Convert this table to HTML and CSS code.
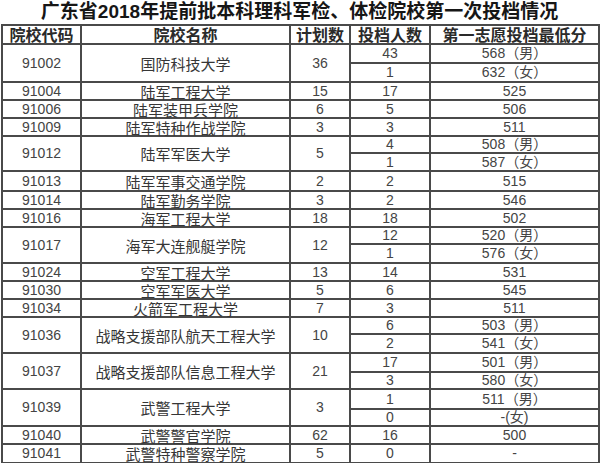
FILE: index.html
```html
<!DOCTYPE html>
<html lang="zh-CN">
<head>
<meta charset="utf-8">
<title>广东省2018年提前批本科理科军检、体检院校第一次投档情况</title>
<link rel="stylesheet" href="styles.css">
</head>
<body>
<div class="sheet">
  <div class="title">广东省2018年提前批本科理科军检、体检院校第一次投档情况</div>
  <table class="grid">
    <colgroup>
      <col class="c-code"><col class="c-name"><col class="c-plan"><col class="c-count"><col class="c-score">
    </colgroup>
    <thead>
      <tr class="h19"><th>院校代码</th><th>院校名称</th><th>计划数</th><th>投档人数</th><th>第一志愿投档最低分</th></tr>
    </thead>
    <tbody>
      <tr class="h19"><td rowspan="2" class="num">91002</td><td rowspan="2" class="name">国防科技大学</td><td rowspan="2" class="num">36</td><td class="num">43</td><td class="num">568（男）</td></tr>
      <tr class="h19"><td class="num">1</td><td class="num">632（女）</td></tr>
      <tr class="h18"><td class="num">91004</td><td class="name">陆军工程大学</td><td class="num">15</td><td class="num">17</td><td class="num">525</td></tr>
      <tr class="h18"><td class="num">91006</td><td class="name">陆军装甲兵学院</td><td class="num">6</td><td class="num">5</td><td class="num">506</td></tr>
      <tr class="h18"><td class="num">91009</td><td class="name">陆军特种作战学院</td><td class="num">3</td><td class="num">3</td><td class="num">511</td></tr>
      <tr class="h17"><td rowspan="2" class="num">91012</td><td rowspan="2" class="name">陆军军医大学</td><td rowspan="2" class="num">5</td><td class="num">4</td><td class="num">508（男）</td></tr>
      <tr class="h18"><td class="num">1</td><td class="num">587（女）</td></tr>
      <tr class="h20"><td class="num">91013</td><td class="name">陆军军事交通学院</td><td class="num">2</td><td class="num">2</td><td class="num">515</td></tr>
      <tr class="h18"><td class="num">91014</td><td class="name">陆军勤务学院</td><td class="num">3</td><td class="num">2</td><td class="num">546</td></tr>
      <tr class="h18"><td class="num">91016</td><td class="name">海军工程大学</td><td class="num">18</td><td class="num">18</td><td class="num">502</td></tr>
      <tr class="h17"><td rowspan="2" class="num">91017</td><td rowspan="2" class="name">海军大连舰艇学院</td><td rowspan="2" class="num">12</td><td class="num">12</td><td class="num">520（男）</td></tr>
      <tr class="h19"><td class="num">1</td><td class="num">576（女）</td></tr>
      <tr class="h18"><td class="num">91024</td><td class="name">空军工程大学</td><td class="num">13</td><td class="num">14</td><td class="num">531</td></tr>
      <tr class="h18"><td class="num">91030</td><td class="name">空军军医大学</td><td class="num">5</td><td class="num">6</td><td class="num">545</td></tr>
      <tr class="h18"><td class="num">91034</td><td class="name">火箭军工程大学</td><td class="num">7</td><td class="num">3</td><td class="num">511</td></tr>
      <tr class="h17"><td rowspan="2" class="num">91036</td><td rowspan="2" class="name">战略支援部队航天工程大学</td><td rowspan="2" class="num">10</td><td class="num">6</td><td class="num">503（男）</td></tr>
      <tr class="h19"><td class="num">2</td><td class="num">541（女）</td></tr>
      <tr class="h19"><td rowspan="2" class="num">91037</td><td rowspan="2" class="name">战略支援部队信息工程大学</td><td rowspan="2" class="num">21</td><td class="num">17</td><td class="num">501（男）</td></tr>
      <tr class="h17"><td class="num">3</td><td class="num">580（女）</td></tr>
      <tr class="h20"><td rowspan="2" class="num">91039</td><td rowspan="2" class="name">武警工程大学</td><td rowspan="2" class="num">3</td><td class="num">1</td><td class="num">511（男）</td></tr>
      <tr class="h17"><td class="num">0</td><td class="num">-(女)</td></tr>
      <tr class="h18"><td class="num">91040</td><td class="name">武警警官学院</td><td class="num">62</td><td class="num">16</td><td class="num">500</td></tr>
      <tr class="h19"><td class="num">91041</td><td class="name">武警特种警察学院</td><td class="num">5</td><td class="num">0</td><td class="num">-</td></tr>
    </tbody>
  </table>
</div>
</body>
</html>
```

FILE: styles.css
```css
html, body {
  margin: 0;
  padding: 0;
  background: #ffffff;
}

body {
  font-family: "Liberation Sans", "Noto Sans CJK SC", sans-serif;
  color: #3a3a3a;
}

.sheet {
  width: 600px;
  padding-left: 1px;
  box-sizing: border-box;
}

.title {
  height: 24px;
  line-height: 24px;
  width: 597px;
  text-align: center;
  font-family: "Liberation Sans", "Noto Sans CJK SC", sans-serif;
  font-weight: bold;
  font-size: 19px;
  color: #161616;
  white-space: nowrap;
}

.grid {
  border-collapse: collapse;
  table-layout: fixed;
  width: 597px;
}

.c-code { width: 79px; }
.c-name { width: 209px; }
.c-plan { width: 60px; }
.c-count { width: 80px; }
.c-score { width: 169px; }

.grid th,
.grid td {
  border: 2px solid #4a4a4a;
  padding: 0;
  text-align: center;
  vertical-align: middle;
  line-height: 15px;
  white-space: nowrap;
}

.grid th {
  font-family: "Noto Sans CJK SC", sans-serif;
  font-size: 16px;
  font-weight: bold;
  color: #2a2a2a;
}

.grid td.num {
  font-size: 14px;
  color: #444444;
}

.grid td.name {
  font-family: "Noto Sans CJK SC", sans-serif;
  font-size: 15px;
  color: #363636;
}

.h17 { height: 17px; }
.h18 { height: 18px; }
.h19 { height: 19px; }
.h20 { height: 20px; }
```
